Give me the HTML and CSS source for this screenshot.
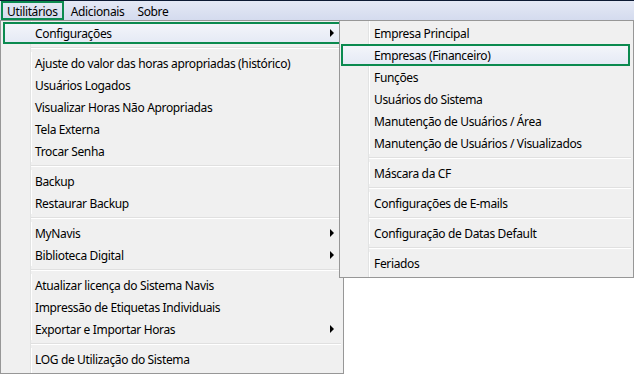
FILE: index.html
```html
<!DOCTYPE html>
<html>
  <head>
    <title>Utilitários</title>
    <link rel="stylesheet" href="styles.css">
  </head>
  <body>
    <div id="menubar">
      <div class="top-item active">Utilitários</div>
      <div class="top-item">Adicionais</div>
      <div class="top-item">Sobre</div>
    </div>

    <div id="main-menu" class="menu">
      <div class="item selected sub">Configurações</div>
      <div class="sep"></div>
      <div class="item">Ajuste do valor das horas apropriadas (histórico)</div>
      <div class="item">Usuários Logados</div>
      <div class="item">Visualizar Horas Não Apropriadas</div>
      <div class="item">Tela Externa</div>
      <div class="item">Trocar Senha</div>
      <div class="sep"></div>
      <div class="item">Backup</div>
      <div class="item">Restaurar Backup</div>
      <div class="sep"></div>
      <div class="item sub">MyNavis</div>
      <div class="item sub">Biblioteca Digital</div>
      <div class="sep"></div>
      <div class="item">Atualizar licença do Sistema Navis</div>
      <div class="item">Impressão de Etiquetas Individuais</div>
      <div class="item sub">Exportar e Importar Horas</div>
      <div class="sep"></div>
      <div class="item">LOG de Utilização do Sistema</div>
    </div>

    <div id="sub-menu" class="menu">
      <div class="item">Empresa Principal</div>
      <div class="item selected">Empresas (Financeiro)</div>
      <div class="item">Funções</div>
      <div class="item">Usuários do Sistema</div>
      <div class="item">Manutenção de Usuários / Área</div>
      <div class="item">Manutenção de Usuários / Visualizados</div>
      <div class="sep"></div>
      <div class="item">Máscara da CF</div>
      <div class="sep"></div>
      <div class="item">Configurações de E-mails</div>
      <div class="sep"></div>
      <div class="item">Configuração de Datas Default</div>
      <div class="sep"></div>
      <div class="item">Feriados</div>
    </div>
  </body>
</html>
```

FILE: styles.css
```css
body {
  margin: 0;
  background-color: white;
  font-family: "Noto Sans", sans-serif;
  font-size: 12px;
  letter-spacing: -0.35px;
  color: black;
  position: relative;
  height: 374px;
  overflow: hidden;
}

#menubar {
  display: flex;
  gap: 1px;
  height: 19px;
  border-top: 1px solid #0c1a33;
  background: linear-gradient(#e4e9f5, #d4dbee);
  padding-left: 1px;
}

.top-item {
  display: flex;
  align-items: center;
  padding: 1px 4px 0 4px;
  border: 2px solid transparent;
  line-height: 15px;
}

.top-item.active {
  border-color: #0b8a4f;
}

.menu {
  position: absolute;
  top: 20px;
  background-color: #f0f0f0;
  border: 1px solid #979797;
  padding: 1px 2px;
  box-sizing: border-box;
}

#main-menu {
  left: 0;
  width: 344px;
  height: 354px;
  background: linear-gradient(to right, #f0f0f0 29px, #e2e3e3 29px, #e2e3e3 30px, #ffffff 30px, #ffffff 31px, #f0f0f0 31px);
}

#sub-menu {
  left: 339px;
  width: 295px;
  height: 258px;
  background: linear-gradient(to right, #f0f0f0 28px, #e2e3e3 28px, #e2e3e3 29px, #ffffff 29px, #ffffff 30px, #f0f0f0 30px);
}

.item {
  position: relative;
  height: 22px;
  line-height: 22px;
  padding: 1px 0 0 32px;
  white-space: nowrap;
  box-sizing: border-box;
}

.item.selected {
  border: 2px solid #0b8a4f;
  line-height: 18px;
  padding-left: 30px;
  background: linear-gradient(#f3f5fa, #e5eaf5);
}

#sub-menu .item.selected {
  margin-left: -1px;
  margin-right: 1px;
  padding-left: 31px;
}

.item.sub::after {
  content: "";
  position: absolute;
  right: 7px;
  top: 7px;
  border-left: 4px solid black;
  border-top: 4px solid transparent;
  border-bottom: 4px solid transparent;
}

.item.selected.sub::after {
  right: 5px;
  top: 5px;
}

.sep {
  height: 8px;
  margin-left: 28px;
  background: linear-gradient(#f0f0f0 3px, #e0e0e0 3px, #e0e0e0 4px, #ffffff 4px, #ffffff 5px, #f0f0f0 5px);
}

#sub-menu .sep {
  margin-left: 27px;
}
```
